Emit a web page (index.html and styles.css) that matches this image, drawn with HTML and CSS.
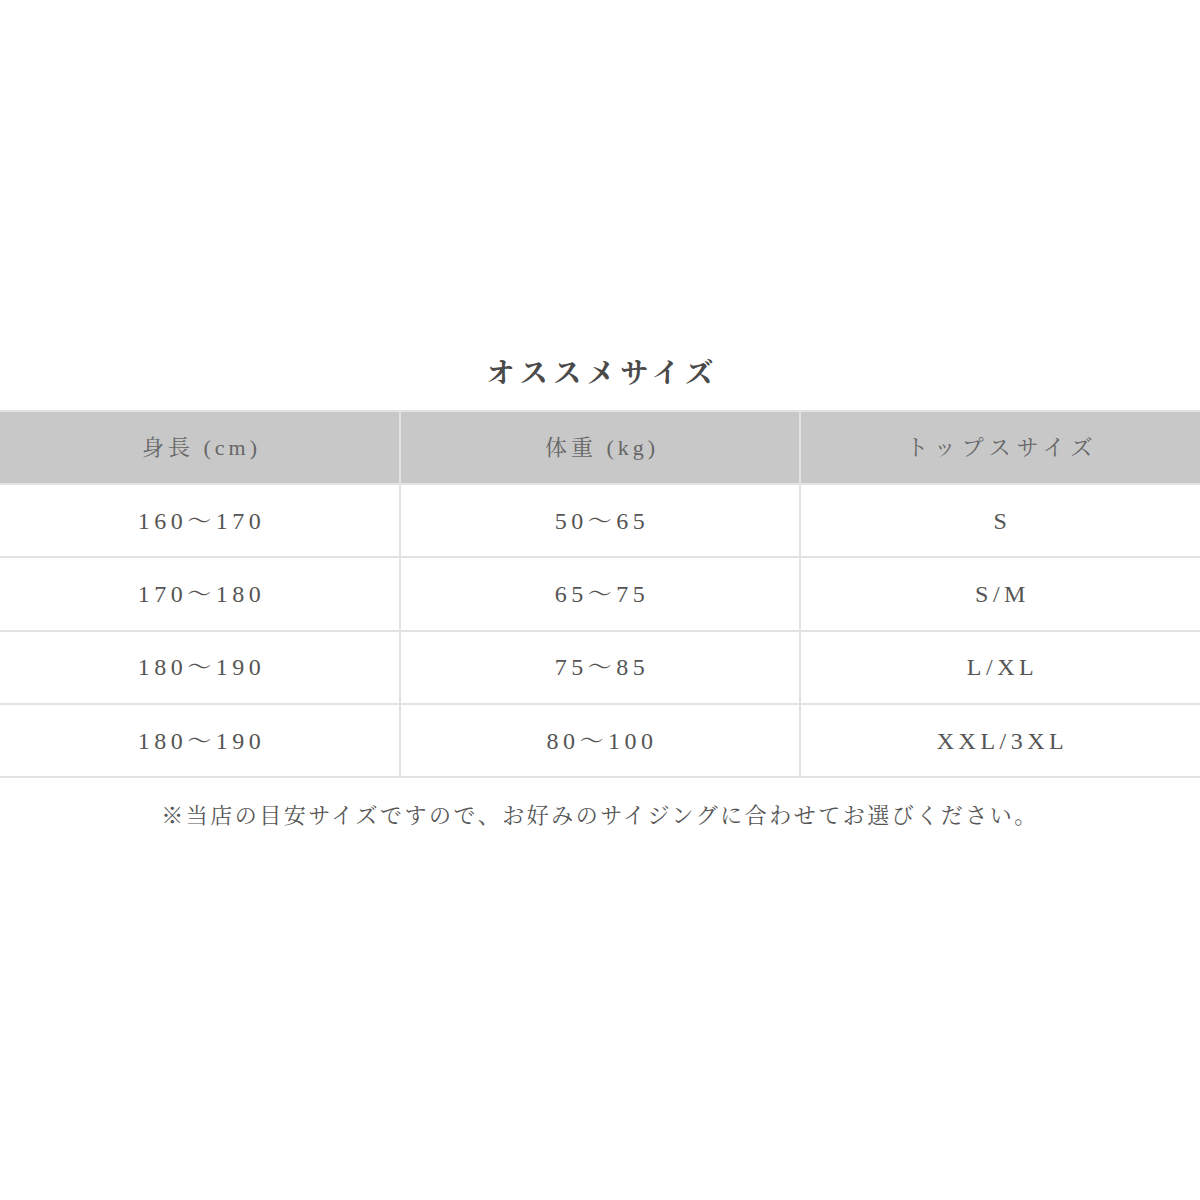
FILE: index.html
```html
<!DOCTYPE html>
<html lang="ja">
<head>
<meta charset="utf-8">
<title>オススメサイズ</title>
<link rel="stylesheet" href="styles.css">
</head>
<body>
<main class="page">
  <h1 class="title">オススメサイズ</h1>
  <table class="size-table">
    <thead>
      <tr><th>身長 (cm)</th><th>体重 (kg)</th><th>トップスサイズ</th></tr>
    </thead>
    <tbody>
      <tr><td>160〜170</td><td>50〜65</td><td>S</td></tr>
      <tr><td>170〜180</td><td>65〜75</td><td>S/M</td></tr>
      <tr><td>180〜190</td><td>75〜85</td><td>L/XL</td></tr>
      <tr><td>180〜190</td><td>80〜100</td><td>XXL/3XL</td></tr>
    </tbody>
  </table>
  <p class="note">※当店の目安サイズですので、お好みのサイジングに合わせてお選びください。</p>
</main>
</body>
</html>
```
FILE: styles.css
```css
html, body {
  margin: 0;
  padding: 0;
  background: #ffffff;
}
body {
  font-family: "Liberation Serif", "Noto Serif CJK JP", "Noto Sans CJK JP", serif;
  color: #555555;
}
.page {
  padding-top: 352px;
  display: flex;
  flex-direction: column;
  align-items: center;
}
.title {
  margin: 0;
  height: 44px;
  line-height: 44px;
  font-size: 28px;
  font-weight: bold;
  letter-spacing: 5.5px;
  color: #4a4a4a;
  padding-left: 5px;
}
.size-table {
  margin-top: 14px;
  width: 1200px;
  border-collapse: collapse;
  table-layout: fixed;
}
.size-table th,
.size-table td {
  text-align: center;
  vertical-align: middle;
  border: 2px solid #e2e2e2;
  height: 71.3px;
  line-height: 30px;
  padding: 0;
  text-indent: 4px;
  font-weight: normal;
  font-size: 24px;
  letter-spacing: 4.5px;
  color: #555555;
}
.size-table th:first-child,
.size-table td:first-child { border-left: none; }
.size-table th:last-child,
.size-table td:last-child { border-right: none; }
.size-table th {
  height: 71px;
  background: #c8c8c8;
  color: #666666;
  font-size: 22px;
  letter-spacing: 4px;
}
.size-table th:last-child {
  letter-spacing: 6px;
}
.note {
  margin: 23px 0 0;
  font-size: 22px;
  line-height: 30px;
  letter-spacing: 2.5px;
  color: #555555;
}
```
